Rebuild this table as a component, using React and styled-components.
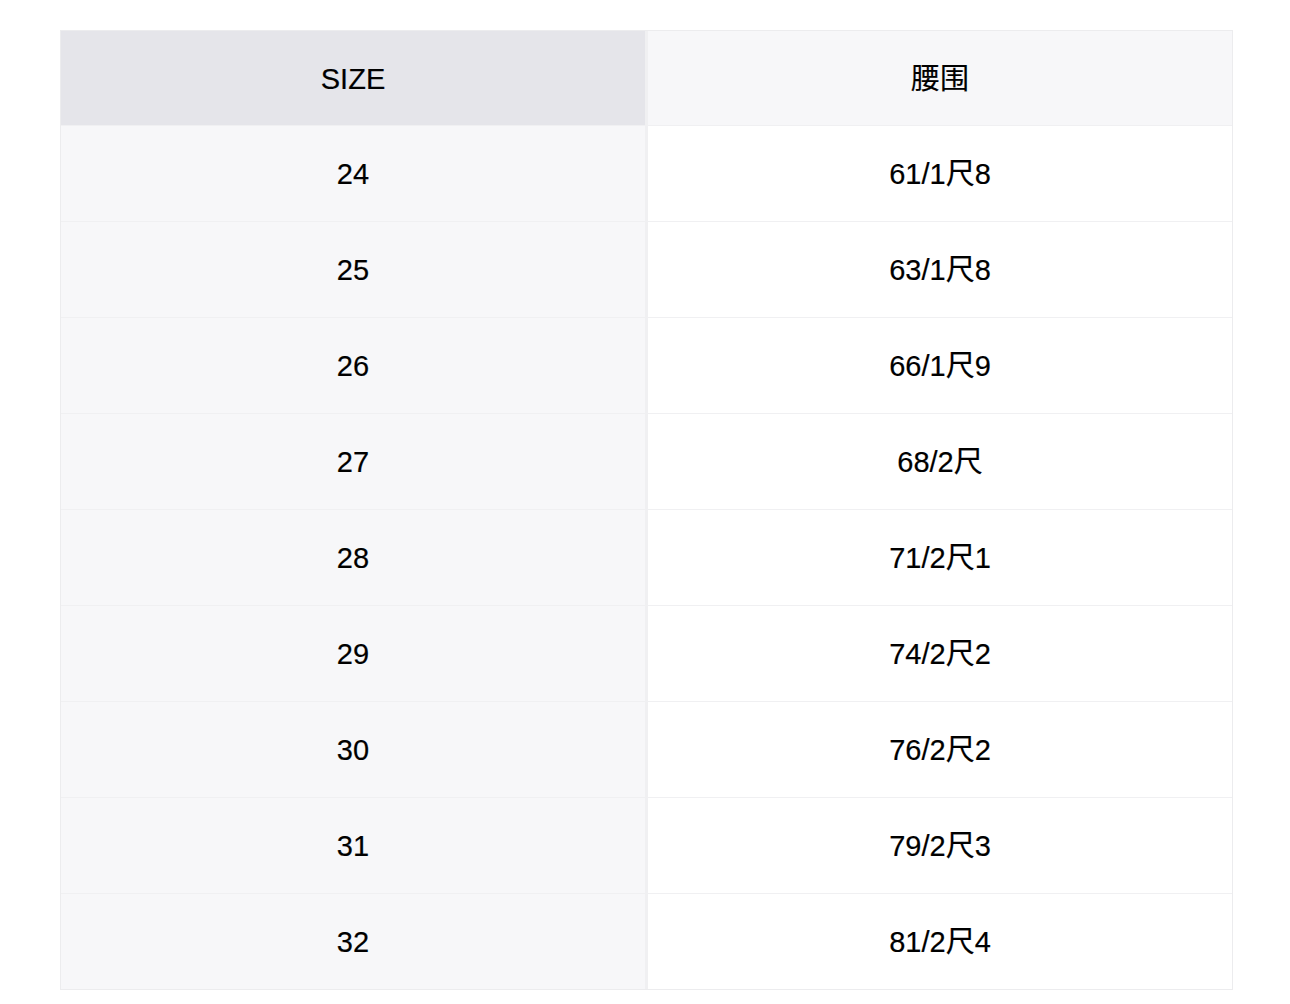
import React from 'react';
import styled, { createGlobalStyle } from 'styled-components';

const GlobalStyle = createGlobalStyle`
  body {
    margin: 0;
    background: #ffffff;
    font-family: "Liberation Sans", "Noto Sans CJK SC", sans-serif;
  }
`;

const Page = styled.div`
  padding: 30px 59px 15px 60px;
`;

const Table = styled.div`
  display: grid;
  grid-template-columns: 584px 584px;
  column-gap: 3px;
  row-gap: 1px;
  background: #f0f0f2;
  border: 1px solid #ececee;
  width: 1171px;
`;

const Cell = styled.div`
  height: ${(p) => (p.head ? '94px' : '95px')};
  display: flex;
  align-items: center;
  justify-content: center;
  font-size: 29px;
  line-height: 1;
  padding-top: 2px;
  box-sizing: border-box;
  color: #000;
  -webkit-text-stroke: 0.2px #000;
  background: ${(p) =>
    p.head ? (p.first ? '#e5e5ea' : '#f7f7f9') : p.first ? '#f7f7f9' : '#ffffff'};
`;

const rows = [
  ['24', '61/1尺8'],
  ['25', '63/1尺8'],
  ['26', '66/1尺9'],
  ['27', '68/2尺'],
  ['28', '71/2尺1'],
  ['29', '74/2尺2'],
  ['30', '76/2尺2'],
  ['31', '79/2尺3'],
  ['32', '81/2尺4'],
];

export default function App() {
  return (
    <>
      <GlobalStyle />
      <Page>
        <Table>
          <Cell head first>SIZE</Cell>
          <Cell head>腰围</Cell>
          {rows.map(([size, waist]) => (
            <React.Fragment key={size}>
              <Cell first>{size}</Cell>
              <Cell>{waist}</Cell>
            </React.Fragment>
          ))}
        </Table>
      </Page>
    </>
  );
}
